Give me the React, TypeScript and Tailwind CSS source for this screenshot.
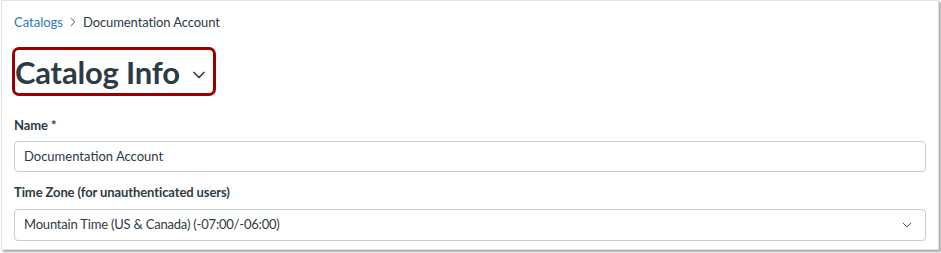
import { ChevronRight, ChevronDown } from "lucide-react";

export default function App() {
  return (
    <div className="w-[941px] h-[253px] bg-white" style={{ fontFamily: "Lato, 'Noto Sans', sans-serif" }}>
      <div className="w-[938px] h-[250px] ml-px border border-[#e3e3e3] shadow-[2px_2px_2px_rgba(0,0,0,0.35)] bg-white px-[12px] pt-[11px] text-[#2d3b45]">
        {/* Breadcrumb */}
        <div className="flex items-center text-[13px] leading-[20px]">
          <a className="text-[#2b7abc]">Catalogs</a>
          <ChevronRight className="w-[14px] h-[14px] mx-[3px] text-[#2d3b45]" strokeWidth={1.5} />
          <span className="tracking-[-0.1px]">Documentation Account</span>
        </div>

        {/* Heading */}
        <div className="mt-[15px] inline-flex items-center gap-[9px] border-[3px] border-[#990000] rounded-[7px] pl-0 pr-[4px] h-[49px] -ml-[2px]">
          <h1 className="text-[31px] font-bold leading-none text-[#2d3b45] mt-[2px] tracking-[-0.2px]">Catalog Info</h1>
          <ChevronDown className="w-[20px] h-[20px] mt-[6px]" strokeWidth={2} />
        </div>

        {/* Name */}
        <div className="mt-[19px]">
          <label className="block text-[13px] font-bold leading-[20px] tracking-[-0.1px]">Name *</label>
          <div className="mt-[6px] h-[31px] w-[912px] border border-[#c7cdd1] rounded-[4px] flex items-center px-[9px] text-[13px]">
            Documentation Account
          </div>
        </div>

        {/* Time Zone */}
        <div className="mt-[10px]">
          <label className="block text-[13px] font-bold leading-[20px] tracking-[-0.1px]">Time Zone (for unauthenticated users)</label>
          <div className="mt-[7px] h-[32px] w-[912px] border border-[#c7cdd1] rounded-[4px] flex items-center justify-between pl-[9px] pr-[10px] text-[13px]">
            <span className="tracking-[-0.2px]">Mountain Time (US &amp; Canada) (-07:00/-06:00)</span>
            <ChevronDown className="w-[16px] h-[16px] text-[#2d3b45]" strokeWidth={1.25} />
          </div>
        </div>
      </div>
    </div>
  );
}
